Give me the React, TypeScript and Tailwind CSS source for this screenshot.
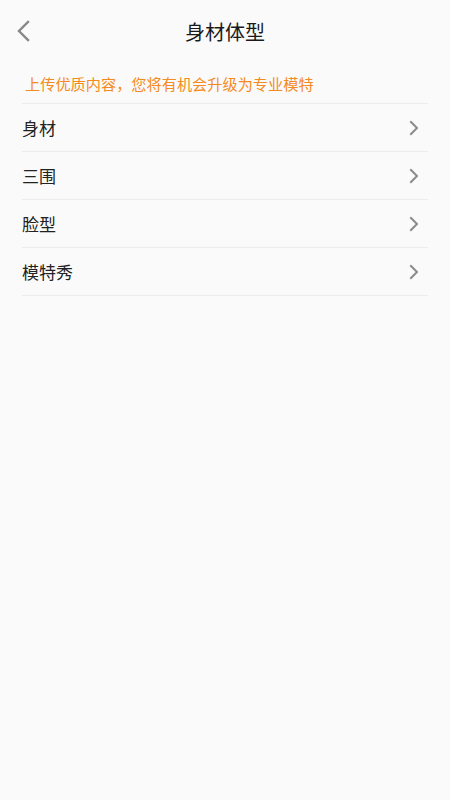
import React from "react";

const font = { fontFamily: '"Noto Sans CJK SC", "Noto Sans", sans-serif' };

function Chevron() {
  return (
    <svg width="10" height="16" viewBox="0 0 10 16" fill="none">
      <path d="M2 2 L8 8 L2 14" stroke="#8a8a8a" strokeWidth="2" strokeLinecap="square" />
    </svg>
  );
}

export default function App() {
  const items = ["身材", "三围", "脸型", "模特秀"];
  return (
    <div className="w-[450px] h-[800px] bg-[#fafafa]" style={font}>
      <div className="relative h-[64px] flex items-center justify-center">
        <div className="absolute left-[16px] top-[20px]">
          <svg width="16" height="22" viewBox="0 0 16 22" fill="none">
            <path d="M12 2 L3 11 L12 20" stroke="#888888" strokeWidth="2.4" strokeLinecap="square" />
          </svg>
        </div>
        <span className="text-[20px] text-[#1a1a1a] leading-none">身材体型</span>
      </div>
      <div className="px-[22px]">
        <div className="h-[39px] flex items-center pl-[3px] text-[15.2px] text-[#f58a20] leading-none">
          上传优质内容，您将有机会升级为专业模特
        </div>
        <div className="h-px bg-[#ececec]" />
        {items.map((t) => (
          <div key={t}>
            <div className="h-[47px] flex items-center justify-between">
              <span className="text-[17px] text-[#222222] leading-none">{t}</span>
              <div className="mr-[9px] flex items-center">
                <Chevron />
              </div>
            </div>
            <div className="h-px bg-[#ececec]" />
          </div>
        ))}
      </div>
    </div>
  );
}
